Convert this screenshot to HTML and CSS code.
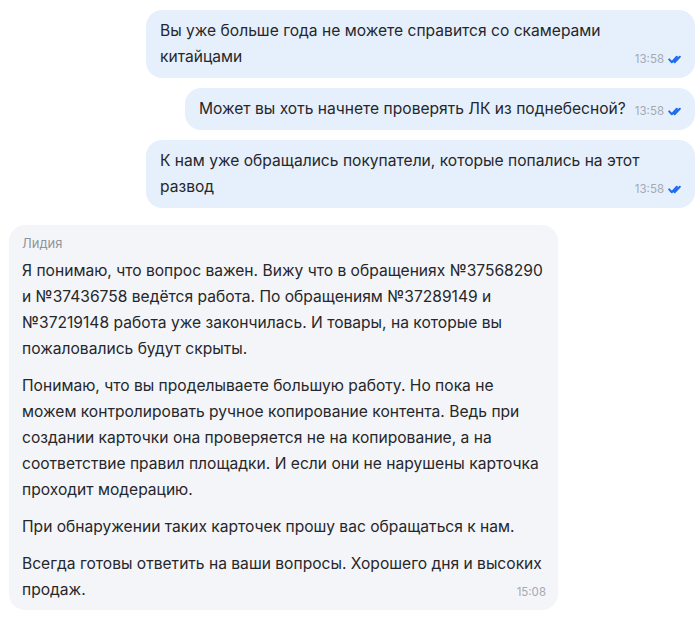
FILE: index.html
```html
<!DOCTYPE html>
<html lang="ru">
<head>
<meta charset="utf-8">
<link rel="stylesheet" href="styles.css">
</head>
<body>
<div class="chat">
  <div class="bubble out">
    <div class="text">Вы уже больше года не можете справится со скамерами китайцами<span class="meta"><span class="time">13:58</span><svg class="ticks" viewBox="0 0 14 9" width="14" height="9"><path d="M1.2 4.4 L3.8 7.2 L8.8 1.8 M6.6 7.2 L11.8 1.8" fill="none" stroke="#1f6bf0" stroke-width="2" stroke-linecap="round" stroke-linejoin="round"/></svg></span></div>
  </div>
  <div class="bubble out">
    <div class="text">Может вы хоть начнете проверять ЛК из поднебесной?<span class="meta"><span class="time">13:58</span><svg class="ticks" viewBox="0 0 14 9" width="14" height="9"><path d="M1.2 4.4 L3.8 7.2 L8.8 1.8 M6.6 7.2 L11.8 1.8" fill="none" stroke="#1f6bf0" stroke-width="2" stroke-linecap="round" stroke-linejoin="round"/></svg></span></div>
  </div>
  <div class="bubble out">
    <div class="text">К нам уже обращались покупатели, которые попались на этот развод<span class="meta"><span class="time">13:58</span><svg class="ticks" viewBox="0 0 14 9" width="14" height="9"><path d="M1.2 4.4 L3.8 7.2 L8.8 1.8 M6.6 7.2 L11.8 1.8" fill="none" stroke="#1f6bf0" stroke-width="2" stroke-linecap="round" stroke-linejoin="round"/></svg></span></div>
  </div>
  <div class="bubble in">
    <div class="name">Лидия</div>
    <p class="para">Я понимаю, что вопрос важен. Вижу что в обращениях №37568290 и №37436758 ведётся работа. По обращениям №37289149 и №37219148 работа уже закончилась. И товары, на которые вы пожаловались будут скрыты.</p>
    <p class="para">Понимаю, что вы проделываете большую работу. Но пока не можем контролировать ручное копирование контента. Ведь при создании карточки она проверяется не на копирование, а на соответствие правил площадки. И если они не нарушены карточка проходит модерацию.</p>
    <p class="para">При обнаружении таких карточек прошу вас обращаться к нам.</p>
    <p class="para">Всегда готовы ответить на ваши вопросы. Хорошего дня и высоких продаж.<span class="meta"><span class="time">15:08</span></span></p>
  </div>
</div>
</body>
</html>
```
FILE: styles.css
```css
html, body {
  margin: 0;
  padding: 0;
  background: #ffffff;
}
body {
  font-family: Inter, "Noto Sans", "Liberation Sans", sans-serif;
  color: #26272a;
}
.chat {
  display: flex;
  flex-direction: column;
  gap: 10px;
  padding: 10px 5px 0 9px;
}
.bubble {
  box-sizing: border-box;
  max-width: 549px;
  border-radius: 16px;
  padding: 8px 13px 8px 14px;
}
.out {
  align-self: flex-end;
  background: #e6f0fd;
}
.in {
  align-self: flex-start;
  background: #f4f5f9;
  margin-top: 7px;
  padding: 8px 12px 7px 13px;
}
.text, .para {
  font-size: 15.6px;
  line-height: 26px;
}
.para {
  margin: 11px 0 0;
}
.name {
  font-size: 13px;
  line-height: 20px;
  color: #8f949c;
}
.name + .para {
  margin-top: 5px;
}
.meta {
  float: right;
  display: flex;
  align-items: center;
  gap: 4px;
  margin-left: 9px;
  padding-top: 8px;
  line-height: 14px;
}
.time {
  font-size: 11.5px;
  color: #a4a9b1;
}
.ticks {
  display: block;
}
```
